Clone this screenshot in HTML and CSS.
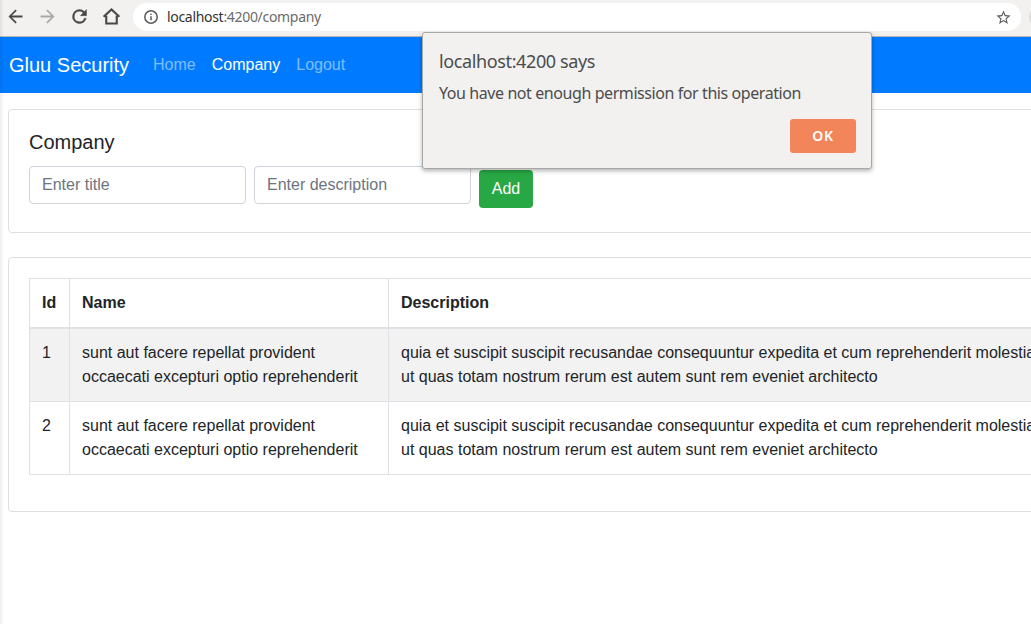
FILE: index.html
```html
<!DOCTYPE html>
<html lang="en">
<head>
<meta charset="utf-8">
<title>Gluu Security</title>
<link rel="stylesheet" href="styles.css">
</head>
<body>
<div class="window">
  <header class="toolbar">
    <div class="tools">
      <svg class="icon" viewBox="0 0 24 24"><path d="M20 10.8H7.83l5.59-5.39L12 4l-8 8 8 8 1.41-1.41L7.83 13.2H20z"/></svg>
      <svg class="icon disabled" viewBox="0 0 24 24"><path d="M12 4l-1.41 1.41 5.58 5.39H4v2.4h12.17l-5.58 5.39L12 20l8-8z"/></svg>
      <svg class="icon" viewBox="0 0 24 24"><path class="bold" d="M17.65 6.35A7.96 7.96 0 0 0 12 4a8 8 0 1 0 7.73 10h-2.08A6 6 0 1 1 12 6c1.66 0 3.14.69 4.22 1.78L13 11h7V4z"/></svg>
      <svg class="icon" viewBox="0 0 24 24"><path class="line" d="M6 11v9h12v-9M3 12.2L12 4l9 8.2"/></svg>
    </div>
    <div class="omnibox">
      <svg class="info" viewBox="0 0 14 14"><circle cx="7" cy="7" r="6.2"/><path d="M7 6.2v4.1M7 3.7v1.4"/></svg>
      <span class="url"><b>localhost</b>:4200/company</span>
      <svg class="star" viewBox="0 0 24 24"><path d="M22 9.24l-7.19-.62L12 2 9.19 8.63 2 9.24l5.46 4.73L5.82 21 12 17.27 18.18 21l-1.63-7.03zM12 15.4l-3.76 2.27 1-4.28-3.32-2.88 4.38-.38L12 6.1l1.71 4.04 4.38.38-3.32 2.88 1 4.28z"/></svg>
    </div>
    <span class="extension"></span>
  </header>
  <nav class="navbar">
    <a class="brand">Gluu Security</a>
    <a class="nav-link">Home</a>
    <a class="nav-link active">Company</a>
    <a class="nav-link">Logout</a>
  </nav>
  <main class="content">
    <section class="card">
      <h5 class="card-title">Company</h5>
      <form class="form">
        <input class="input" type="text" placeholder="Enter title">
        <input class="input" type="text" placeholder="Enter description">
        <button class="add" type="button">Add</button>
      </form>
    </section>
    <section class="card">
      <table class="table">
        <thead><tr><th class="col-id">Id</th><th class="col-name">Name</th><th>Description</th></tr></thead>
        <tbody>
          <tr><td>1</td><td>sunt aut facere repellat provident<br>occaecati excepturi optio reprehenderit</td><td>quia et suscipit suscipit recusandae consequuntur expedita et cum reprehenderit molestiae<br>ut quas totam nostrum rerum est autem sunt rem eveniet architecto</td></tr>
          <tr><td>2</td><td>sunt aut facere repellat provident<br>occaecati excepturi optio reprehenderit</td><td>quia et suscipit suscipit recusandae consequuntur expedita et cum reprehenderit molestiae<br>ut quas totam nostrum rerum est autem sunt rem eveniet architecto</td></tr>
        </tbody>
      </table>
    </section>
  </main>
  <div class="dialog" role="alertdialog">
    <div class="dialog-title">localhost:4200 says</div>
    <div class="dialog-text">You have not enough permission for this operation</div>
    <button class="ok" type="button">OK</button>
  </div>
</div>
</body>
</html>
```
FILE: styles.css
```css
* { box-sizing: border-box; }
body {
  margin: 0;
  overflow: hidden;
  background: #fff;
  color: #212529;
  font: 16px/24px "Liberation Sans", Arial, sans-serif;
}
.window { position: relative; height: 624px; overflow: hidden; }
/* soft edge of the window behind */
.window::before {
  content: "";
  position: absolute;
  z-index: 2;
  inset: 0 auto 0 0;
  width: 4px;
  background: linear-gradient(90deg, rgba(0,0,0,.07), transparent);
}
.toolbar {
  display: flex;
  align-items: flex-start;
  height: 37px;
  padding: 3px 0 0 4px;
  background: #f2f1f0;
  border-bottom: 1px solid #b9b7b4;
}
.tools { display: flex; flex: none; gap: 11px; width: 129px; padding: 3px 0 0 1px; }
.icon { flex: none; width: 21px; height: 21px; fill: #484848; }
.icon.disabled { fill: #aaa9a8; }
.bold { stroke: #484848; stroke-width: .5; }
.line { fill: none; stroke: #484848; stroke-width: 2.4; }
.omnibox {
  display: flex;
  flex: none;
  align-items: center;
  width: 888px;
  height: 28px;
  padding: 0 9px 0 11px;
  border-radius: 14px;
  background: #fff;
}
.info { width: 14px; height: 14px; fill: none; stroke: #5b5b5b; stroke-width: 1.5; }
.url {
  flex: 1;
  margin-left: 9px;
  color: #6b6b6b;
  font: 14px/28px "Noto Sans", sans-serif;
  letter-spacing: -.31px;
}
.url b { color: #333; font-weight: 400; }
.star { width: 17px; height: 17px; fill: #5f5f5f; }
.extension {
  flex: none;
  width: 26px;
  height: 26px;
  margin: 1px 0 0 8px;
  border-radius: 50%;
  background: #dddcdb;
}
.navbar {
  display: flex;
  align-items: center;
  height: 56px;
  padding: 0 9px 1px;
  background: #007bff;
}
.brand { margin-right: 16px; color: #fff; font-size: 20px; line-height: 30px; }
.nav-link { padding: 0 8px; color: rgba(255,255,255,.5); }
.nav-link.active { color: #fff; }
.content { display: grid; gap: 24px; width: 1320px; padding: 16px 8px; }
.card { padding: 20px; border: 1px solid #dfdfdf; border-radius: 4px; }
.card-title { margin: 0 0 12px; font-size: 20px; font-weight: 500; line-height: 24px; }
.form { display: flex; gap: 8px; height: 46px; }
.input {
  width: 217px;
  height: 38px;
  padding: 6px 12px;
  border: 1px solid #ced4da;
  border-radius: 4px;
  font: inherit;
}
.input::placeholder { color: #6c757d; opacity: 1; }
.add {
  width: 54px;
  height: 38px;
  margin-top: 4px;
  padding: 0;
  border: 0;
  border-radius: 4px;
  background: #28a745;
  color: #fff;
  font: inherit;
}
.table {
  width: 100%;
  margin-bottom: 16px;
  border-collapse: collapse;
  table-layout: fixed;
  border: 1px solid #dee2e6;
}
.table th, .table td {
  padding: 12px;
  border: 1px solid #dee2e6;
  text-align: left;
  vertical-align: top;
}
.table th { border-bottom-width: 2px; }
.table tbody tr:first-child { background: #f2f2f2; }
.col-id { width: 40px; }
.col-name { width: 319px; }
.dialog {
  position: absolute;
  z-index: 3;
  top: 32px;
  left: 422px;
  display: flex;
  flex-direction: column;
  width: 450px;
  height: 137px;
  padding: 15px 15px 15px 16px;
  border: 1px solid #aaa8a6;
  border-radius: 3px;
  background: #f2f1f0;
  box-shadow: 0 2px 4px rgba(0,0,0,.3);
  color: #4c4c4c;
  font-family: "Noto Sans", sans-serif;
}
.dialog-title { font-size: 18px; line-height: 26px; letter-spacing: -.38px; }
.dialog-text { margin-top: 7px; font-size: 16px; line-height: 24px; letter-spacing: -.42px; }
.ok {
  align-self: flex-end;
  width: 66px;
  height: 34px;
  margin-top: auto;
  padding: 0 0 2px;
  border: 0;
  border-radius: 3px;
  background: #f2855a;
  color: #fff;
  font: 600 14px "Noto Sans", sans-serif;
  letter-spacing: .6px;
}
```
